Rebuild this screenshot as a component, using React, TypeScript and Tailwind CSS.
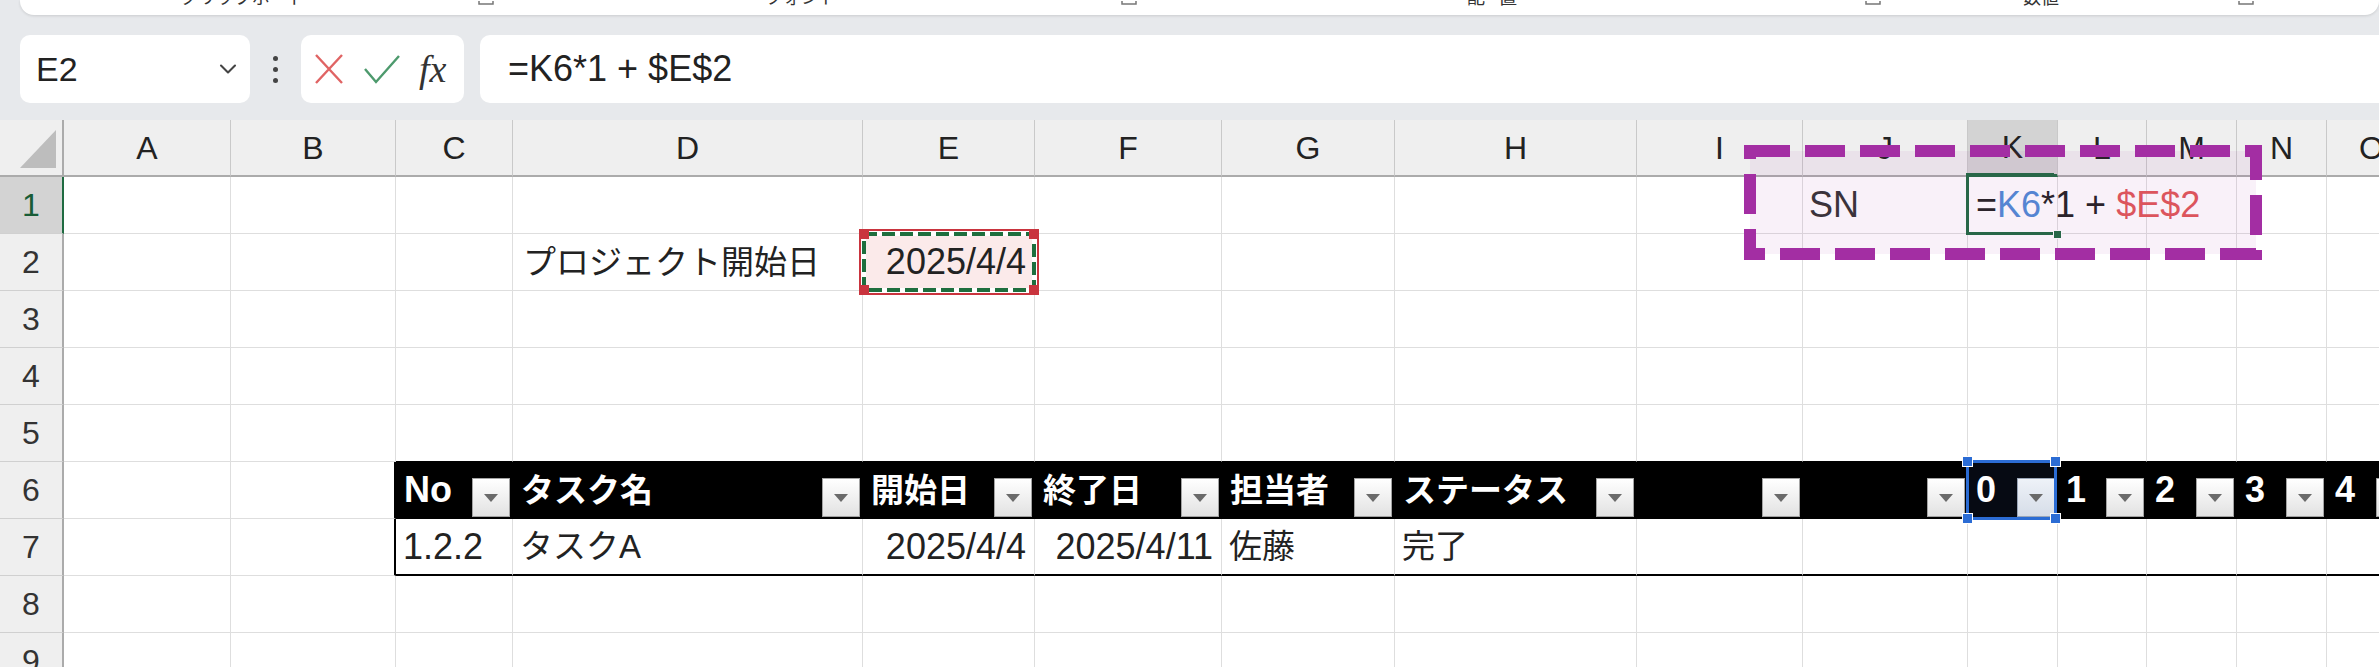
import { ChevronDown } from 'lucide-react';

const colW = [
  'w-[64px]', 'w-[167px]', 'w-[165px]', 'w-[117px]', 'w-[350px]', 'w-[172px]', 'w-[187px]', 'w-[173px]',
  'w-[242px]', 'w-[166px]', 'w-[165px]', 'w-[90px]', 'w-[89px]', 'w-[90px]', 'w-[90px]', 'w-[90px]',
];
const letters = ['', 'A', 'B', 'C', 'D', 'E', 'F', 'G', 'H', 'I', 'J', 'K', 'L', 'M', 'N', 'O'];

const headerLabels: Record<number, string> = {
  3: 'No', 4: 'タスク名', 5: '開始日', 6: '終了日', 7: '担当者', 8: 'ステータス',
  9: '', 10: '', 11: '0', 12: '1', 13: '2', 14: '3', 15: '4',
};

const rowData: Record<number, { text: string; right?: boolean; jp?: boolean }> = {
  3: { text: '1.2.2' },
  4: { text: 'タスクA', jp: true },
  5: { text: '2025/4/4', right: true },
  6: { text: '2025/4/11', right: true },
  7: { text: '佐藤', jp: true },
  8: { text: '完了', jp: true },
};

function Launcher() {
  return (
    <svg width="16" height="5" viewBox="0 0 16 5" className="shrink-0">
      <path d="M1 0v3h14V0" fill="none" stroke="#777" strokeWidth="1.5" />
    </svg>
  );
}

function FilterBtn({ active }: { active?: boolean }) {
  return (
    <div
      className={
        'self-end mb-[1px] mr-[2px] w-[38px] h-[39px] shrink-0 border flex items-center justify-center ' +
        (active
          ? 'border-[#9aa6b8] bg-linear-to-b from-[#eef2f8] to-[#d6dde8]'
          : 'border-[#a3a3a3] bg-linear-to-b from-white to-[#e2e2e2]')
      }
    >
      <svg width="14" height="8" viewBox="0 0 14 8">
        <path d="M0 0h14L7 8z" fill="#6a6a6a" />
      </svg>
    </div>
  );
}

function Corner({ pos }: { pos: string }) {
  return <div className={'absolute w-[11px] h-[11px] bg-[#2b6cd4] border border-white ' + pos} />;
}

function cellClass(r: number, c: number) {
  const base = 'relative shrink-0 h-full flex items-center border-r border-b ';
  if (r === 6 && c === 11) return base + 'bg-[#060a13] border-r-black border-b-black text-white font-bold';
  if (r === 6 && c >= 3) return base + 'bg-black border-r-black border-b-black text-white font-bold';
  if (r === 7 && c >= 3) return base + 'bg-white border-r-[#dedede] border-b-2 border-b-black';
  if ((r === 6 || r === 7) && c === 2) return base + 'bg-white border-r-2 border-r-black border-b-[#dedede]';
  if (r === 5 && c >= 3) return base + 'bg-white border-r-[#dedede] border-b-black';
  if (r === 2 && c === 5) return base + 'bg-[#fbeaea] border-r-[#dedede] border-b-[#dedede]';
  return base + 'bg-white border-r-[#dedede] border-b-[#dedede]';
}

function CellContent({ r, c }: { r: number; c: number }) {
  if (r === 1 && c === 10) return <span className="pl-[6px] text-[#333]">SN</span>;
  if (r === 1 && c === 11)
    return (
      <>
        <span className="relative z-10 whitespace-nowrap pl-[8px] text-[#222]">
          =<span className="text-[#4f8bd6]">K6</span>*1 + <span className="text-[#e05858]">$E$2</span>
        </span>
        <div className="absolute left-[-2px] top-[-4px] bottom-[-2px] right-[3px] border-l-[3px] border-t-[3px] border-b-[3px] border-[#1f6b41] z-10" />
        <div className="absolute right-[-5px] bottom-[-6px] w-[9px] h-[9px] bg-[#1f6b41] border border-white z-10" />
      </>
    );
  if (r === 2 && c === 4)
    return <span className="pl-[10px] text-[33px] text-[#222]">プロジェクト開始日</span>;
  if (r === 2 && c === 5)
    return (
      <>
        <span className="ml-auto pr-[8px] text-[#222]">2025/4/4</span>
        <svg className="absolute left-[-4px] top-[-5px] z-10" width="180" height="66" viewBox="0 0 180 66">
          <rect x="1" y="1" width="178" height="64" fill="none" stroke="#c9343e" strokeWidth="2" />
          <rect x="5" y="5" width="170" height="56" fill="none" stroke="#ffffff" strokeWidth="4" />
          <rect x="5" y="5" width="170" height="56" fill="none" stroke="#1e6e3e" strokeWidth="4" strokeDasharray="13 5" />
          <rect x="0" y="0" width="10" height="10" fill="#c9343e" />
          <rect x="170" y="0" width="10" height="10" fill="#c9343e" />
          <rect x="0" y="56" width="10" height="10" fill="#c9343e" />
          <rect x="170" y="56" width="10" height="10" fill="#c9343e" />
        </svg>
      </>
    );
  if (r === 6 && c >= 3) {
    const label = headerLabels[c];
    const jp = c >= 4 && c <= 8;
    return (
      <>
        <span className={'pl-[8px] whitespace-nowrap ' + (jp ? 'text-[33px]' : '')}>{label}</span>
        <div className="flex-1" />
        <FilterBtn active={c === 11} />
        {c === 11 && (
          <div className="absolute left-[-2px] top-[-2px] right-[0px] bottom-[-2px] border-[3px] border-[#2b6cd4] z-10">
            <Corner pos="left-[-7px] top-[-7px]" />
            <Corner pos="right-[-7px] top-[-7px]" />
            <Corner pos="left-[-7px] bottom-[-7px]" />
            <Corner pos="right-[-7px] bottom-[-7px]" />
          </div>
        )}
      </>
    );
  }
  if (r === 7 && rowData[c]) {
    const d = rowData[c];
    return (
      <span
        className={
          'text-[#222] whitespace-nowrap ' +
          (d.right ? 'ml-auto pr-[8px] ' : 'pl-[7px] ') +
          (d.jp ? 'text-[33px]' : '')
        }
      >
        {d.text}
      </span>
    );
  }
  return null;
}

function HeaderRow() {
  return (
    <div className="flex h-[57px] shrink-0">
      {colW.map((w, i) =>
        i === 0 ? (
          <div key={i} className={w + ' relative shrink-0 h-full bg-[#efefef] border-r-2 border-r-[#ababab] border-b-2 border-b-[#ababab]'}>
            <svg className="absolute left-[20px] top-[10px]" width="36" height="38" viewBox="0 0 36 38">
              <path d="M36 0V38H0z" fill="#bdbdbd" />
            </svg>
          </div>
        ) : (
          <div
            key={i}
            className={
              w +
              ' shrink-0 h-full flex items-center justify-center text-[32px] text-[#222] border-r border-r-[#c9c9c9] ' +
              (i === 11 ? 'bg-[#d3d3d3] border-b-[3px] border-b-[#1f6b41]' : 'bg-[#efefef] border-b-2 border-b-[#ababab]')
            }
          >
            {letters[i]}
          </div>
        )
      )}
    </div>
  );
}

function Row({ r }: { r: number }) {
  return (
    <div className="flex h-[57px] shrink-0">
      {colW.map((w, c) =>
        c === 0 ? (
          <div
            key={c}
            className={
              w +
              ' relative shrink-0 h-full flex items-center justify-center text-[32px] border-b border-b-[#d0d0d0] border-r-2 ' +
              (r === 1 ? 'bg-[#d3d3d3] text-[#185c36] border-r-[#1f6b41]' : 'bg-[#efefef] text-[#333] border-r-[#ababab]')
            }
          >
            {r}
          </div>
        ) : (
          <div key={c} className={w + ' ' + cellClass(r, c)}>
            <CellContent r={r} c={c} />
          </div>
        )
      )}
    </div>
  );
}

export default function App() {
  return (
    <div className="relative w-[2379px] h-[667px] overflow-hidden bg-[#e7e9ec] text-[36px] leading-none font-['Liberation_Sans','Noto_Sans_CJK_JP',sans-serif]">
      {/* ribbon bottom edge */}
      <div className="ml-[20px] h-[15px] bg-white rounded-b-[14px] overflow-hidden flex items-start shadow-[0_1px_3px_rgba(0,0,0,0.12)] text-[18px] text-[#333]">
        <div className="w-[458px] shrink-0 pl-[160px] mt-[-11px]">クリップボード</div>
        <div className="w-[287px] shrink-0 pt-[1px]"><Launcher /></div>
        <div className="w-[356px] shrink-0 mt-[-11px]">フォント</div>
        <div className="w-[346px] shrink-0 pt-[1px]"><Launcher /></div>
        <div className="w-[398px] shrink-0 mt-[-11px] tracking-[14px]">配置</div>
        <div className="w-[158px] shrink-0 pt-[1px]"><Launcher /></div>
        <div className="w-[215px] shrink-0 mt-[-11px]">数値</div>
        <div className="shrink-0 pt-[1px]"><Launcher /></div>
      </div>

      {/* formula bar */}
      <div className="flex h-[68px] mt-[20px] pl-[20px]">
        <div className="w-[230px] shrink-0 rounded-[10px] bg-white flex items-center justify-between pl-[16px] pr-[8px]">
          <span className="text-[34px] text-[#222]">E2</span>
          <ChevronDown size={28} strokeWidth={1.8} color="#444" />
        </div>
        <div className="w-[51px] shrink-0 flex flex-col items-center justify-center gap-[6px]">
          <div className="w-[5px] h-[5px] rounded-full bg-[#444]" />
          <div className="w-[5px] h-[5px] rounded-full bg-[#444]" />
          <div className="w-[5px] h-[5px] rounded-full bg-[#444]" />
        </div>
        <div className="w-[163px] shrink-0 rounded-[10px] bg-white flex items-center pl-[12px]">
          <svg width="32" height="32" viewBox="0 0 32 32">
            <path d="M3 2l26 28M29 2L3 30" stroke="#e06464" strokeWidth="2.4" fill="none" />
          </svg>
          <svg className="ml-[18px]" width="38" height="30" viewBox="0 0 38 30">
            <path d="M2 15l11 13L36 2" stroke="#4d9a6d" strokeWidth="2.4" fill="none" />
          </svg>
          <span className="ml-[18px] font-['Liberation_Serif',serif] italic text-[38px] text-[#333]">fx</span>
        </div>
        <div className="ml-[16px] flex-1 rounded-l-[10px] bg-white flex items-center pl-[28px]">
          <span className="text-[#222]">=K6*1 + $E$2</span>
        </div>
      </div>

      {/* grid */}
      <div className="mt-[17px] flex flex-col">
        <HeaderRow />
        {[1, 2, 3, 4, 5, 6, 7, 8, 9].map((r) => (
          <Row key={r} r={r} />
        ))}
      </div>

      {/* annotation box */}
      <svg className="absolute left-[1744px] top-[145px] z-20" width="518" height="115" viewBox="0 0 518 115">
        <rect x="6" y="6" width="506" height="103" fill="rgba(168,52,168,0.07)" stroke="#a32ea3" strokeWidth="12" strokeDasharray="40 15" />
      </svg>
    </div>
  );
}
